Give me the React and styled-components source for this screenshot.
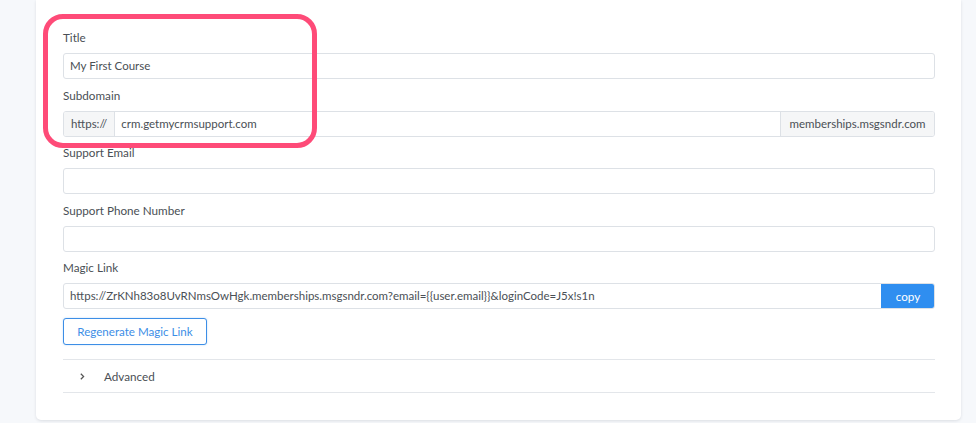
import React from "react";
import styled, { createGlobalStyle } from "styled-components";

const Global = createGlobalStyle`
  html, body { margin: 0; padding: 0; background: #f6f8fb; }
  body { font-family: Lato, "Open Sans", sans-serif; }
  * { box-sizing: border-box; }
`;

const Page = styled.div`
  width: 976px;
  height: 423px;
  overflow: hidden;
  padding: 0 15px 0 36px;
  position: relative;
`;

const Card = styled.div`
  background: #fff;
  border-radius: 0 0 5px 5px;
  box-shadow: 0 1px 3px rgba(30, 40, 60, 0.12);
  padding: 27px 26px 27px 27px;
  width: 925px;
`;

const Group = styled.div`
  display: flex;
  flex-direction: column;
  gap: 6px;
  margin-bottom: 5.5px;
`;

const Label = styled.label`
  font-size: 11.7px;
  line-height: 20px;
  height: 20px;
  color: #4a4f55;
`;

const Field = styled.div`
  display: flex;
  height: 26px;
  border: 1px solid #dde1e6;
  border-radius: 3px;
  overflow: hidden;
  background: #fff;
`;

const Value = styled.div`
  flex: 1;
  font-size: 11.5px;
  line-height: 24px;
  color: #4a4f55;
  padding: 0 6px;
  white-space: nowrap;
`;

const Addon = styled.div`
  background: #f5f6f7;
  font-size: 11.5px;
  line-height: 24px;
  color: #4a4f55;
  padding: 0 ${(p) => (p.$side === "left" ? "7px" : "8.5px")};
  white-space: nowrap;
  ${(p) => (p.$side === "left" ? "border-right: 1px solid #dde1e6;" : "border-left: 1px solid #dde1e6;")}
`;

const CopyButton = styled.button`
  border: none;
  background: #2f8ef0;
  color: #fff;
  font-family: inherit;
  font-size: 11.7px;
  width: 54px;
  margin: -1px -1px -1px 0;
  padding: 0;
`;

const OutlineButton = styled.button`
  display: block;
  margin-top: 9px;
  height: 27px;
  width: 144px;
  border: 1px solid #3d8ee6;
  border-radius: 3px;
  background: #fff;
  color: #3d8ee6;
  font-family: inherit;
  font-size: 11.6px;
  padding: 0;
  box-shadow: 0 0 2px rgba(61, 142, 230, 0.35);
`;

const Accordion = styled.div`
  margin-top: 14px;
  border-top: 1px solid #e3e6ea;
  border-bottom: 1px solid #e3e6ea;
  height: 34px;
  display: flex;
  align-items: center;
  padding-left: 15px;
  gap: 17px;
  font-size: 11.7px;
  color: #4a4f55;
`;

const Highlight = styled.div`
  position: absolute;
  left: 43px;
  top: 14px;
  width: 274px;
  height: 134px;
  border: 5px solid #fe4b78;
  border-radius: 20px;
  pointer-events: none;
`;

export default function App() {
  return (
    <>
      <Global />
      <Page>
        <Card>
          <Group>
            <Label>Title</Label>
            <Field>
              <Value>My First Course</Value>
            </Field>
          </Group>
          <Group>
            <Label>Subdomain</Label>
            <Field>
              <Addon $side="left">https://</Addon>
              <Value>crm.getmycrmsupport.com</Value>
              <Addon $side="right">memberships.msgsndr.com</Addon>
            </Field>
          </Group>
          <Group>
            <Label>Support Email</Label>
            <Field>
              <Value />
            </Field>
          </Group>
          <Group>
            <Label>Support Phone Number</Label>
            <Field>
              <Value />
            </Field>
          </Group>
          <Group>
            <Label>Magic Link</Label>
            <Field>
              <Value>
                {"https://ZrKNh83o8UvRNmsOwHgk.memberships.msgsndr.com?email={{user.email}}&loginCode=J5x!s1n"}
              </Value>
              <CopyButton>copy</CopyButton>
            </Field>
          </Group>
          <OutlineButton>Regenerate Magic Link</OutlineButton>
          <Accordion>
            <svg width="9" height="9" viewBox="0 0 8 8">
              <path d="M2.5 1.5 L5 4 L2.5 6.5" fill="none" stroke="#555" strokeWidth="1.1" />
            </svg>
            <span>Advanced</span>
          </Accordion>
        </Card>
        <Highlight />
      </Page>
    </>
  );
}
